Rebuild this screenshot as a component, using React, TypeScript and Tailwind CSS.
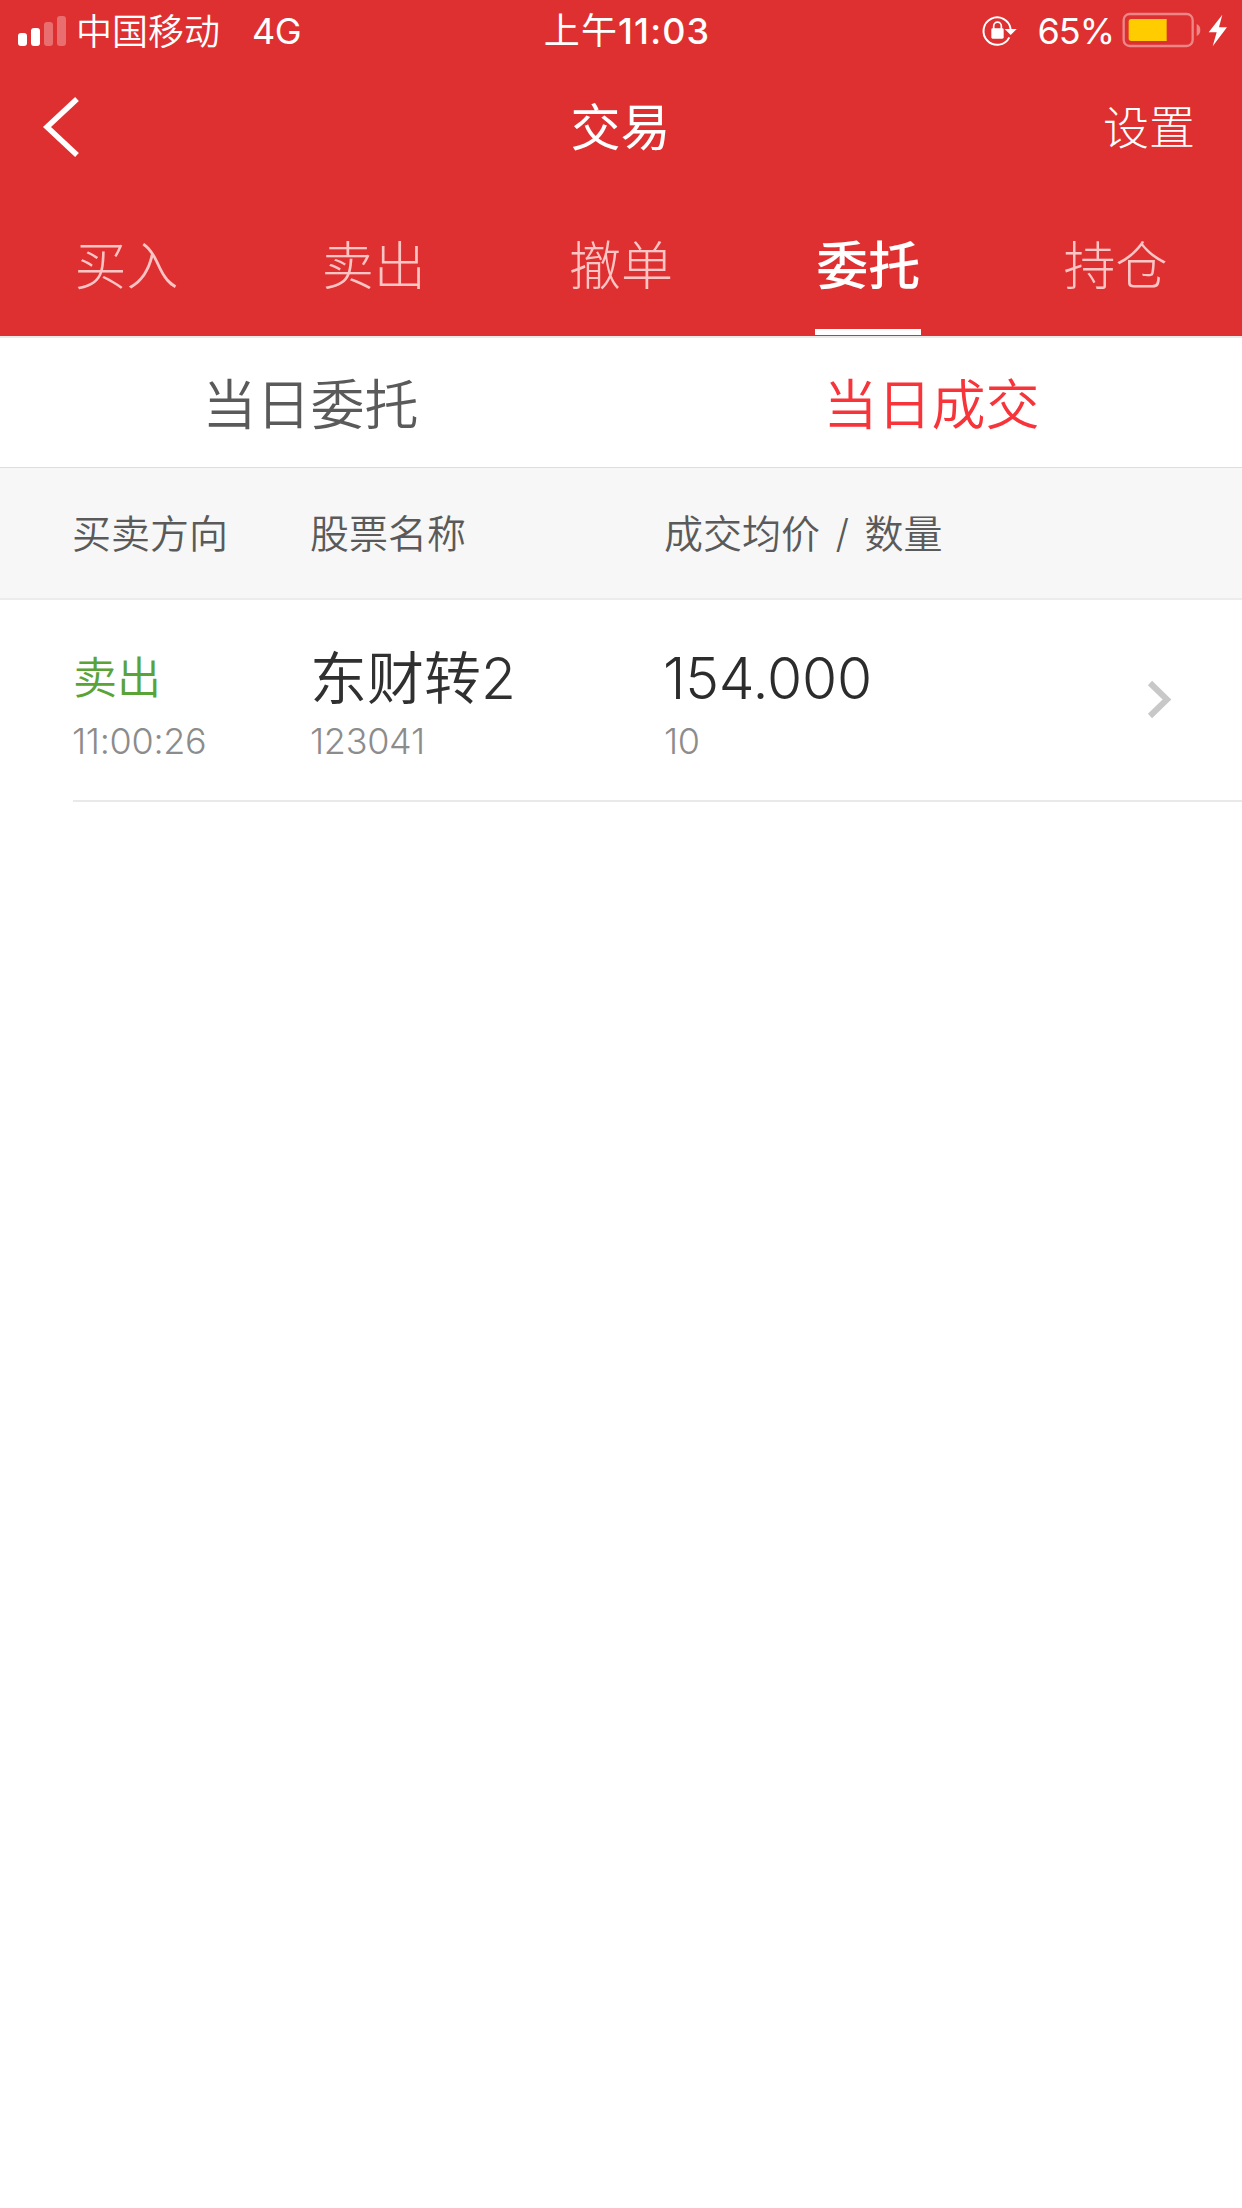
import clsx from "clsx";

const tabs = ["买入", "卖出", "撤单", "委托", "持仓"];
const activeTab = "委托";

const deals = [
  { side: "卖出", time: "11:00:26", name: "东财转2", code: "123041", price: "154.000", amount: "10" },
];

function SignalBars() {
  return (
    <div className="flex items-end gap-1">
      <span className="h-[13px] w-[9px] rounded-[3px] bg-white" />
      <span className="h-[18px] w-[9px] rounded-[3px] bg-white" />
      <span className="h-6 w-[9px] rounded-[3px] bg-white/30" />
      <span className="h-[30px] w-[9px] rounded-[3px] bg-white/30" />
    </div>
  );
}

function RotationLock() {
  return (
    <svg className="h-[34px] w-9" viewBox="64 38 108 102" fill="none">
      <path d="M149 111A41 41 0 1 1 153 86" stroke="#fff" strokeWidth="6" />
      <path d="M135 86H171L153 104Z" fill="#fff" />
      <rect x="95" y="84" width="37" height="31" rx="4" fill="#fff" />
      <path d="M102 86V77a11.5 11.5 0 0 1 23 0V86" stroke="#fff" strokeWidth="5" />
    </svg>
  );
}

function Battery() {
  return (
    <svg className="h-9 w-20" viewBox="484 36 240 108" fill="none">
      <rect x="489" y="42" width="207" height="96" rx="18" stroke="#fff" strokeOpacity=".42" strokeWidth="7" />
      <path d="M512 57H618V123H512Q504 123 504 115V65Q504 57 512 57Z" fill="#ffcc00" />
      <path d="M708 72Q719 77 719 90T708 108Z" fill="#fff" fillOpacity=".42" />
    </svg>
  );
}

function Bolt() {
  return (
    <svg className="h-9 w-5" viewBox="745 36 60 108">
      <path d="M788 44L747 97H771L759 139L802 82H778Z" fill="#fff" />
    </svg>
  );
}

function StatusBar() {
  return (
    <div className="grid h-[62px] grid-cols-3 items-center text-[36px] leading-none text-white">
      <div className="flex items-center pl-[18px]">
        <SignalBars />
        <span className="mt-[1px] ml-[10px] font-[350]">中国移动</span>
        <span className="ml-8 font-normal tracking-[-0.5px]">4G</span>
      </div>
      <div className="pl-[12px] text-center font-medium tracking-[1.1px]">
        <span className="font-normal">上午</span>11:03
      </div>
      <div className="flex items-center justify-end pr-[14px]">
        <span className="mr-[20px] -mt-[2px] flex">
          <RotationLock />
        </span>
        <span className="mr-[8px] font-normal tracking-[-1px]">65%</span>
        <span className="-mt-[2px] flex items-center gap-[6px]">
          <Battery />
          <Bolt />
        </span>
      </div>
    </div>
  );
}

function NavBar() {
  return (
    <div className="grid h-[130px] grid-cols-3 items-center leading-none text-white">
      <svg className="ml-[42px] h-[62px] w-10" viewBox="0 0 40 62" fill="none">
        <path d="M35 3L5 31L35 59" stroke="#fff" strokeWidth="5.5" />
      </svg>
      <div className="pt-[1px] pr-[1px] text-center text-[50px] font-normal">交易</div>
      <div className="pr-[47px] text-right text-[46px] font-light">设置</div>
    </div>
  );
}

function TabBar() {
  return (
    <div className="grid h-36 grid-cols-5 px-[3px] text-[52px] leading-none">
      {tabs.map((tab) => (
        <div key={tab} className="relative flex items-center justify-center pt-[5px]">
          <span className={tab === activeTab ? "font-medium text-white" : "font-light text-[#ffc4c4]"}>{tab}</span>
          {tab === activeTab && <span className="absolute bottom-[1px] h-[6px] w-[106px] bg-white" />}
        </div>
      ))}
    </div>
  );
}

function SubTabs() {
  return (
    <div className="grid h-[132px] grid-cols-2 border-t-2 border-b border-t-[#ece9e9] border-b-[#dedede] pt-[6px] text-[54px] leading-none font-[350]">
      <div className="flex items-center justify-center text-[#5a5a5a]">当日委托</div>
      <div className="flex items-center justify-center text-[#f7343a]">当日成交</div>
    </div>
  );
}

const columns = "grid grid-cols-[237px_354px_1fr_auto] pl-[73px]";

function DealRow({ deal }: { deal: (typeof deals)[number] }) {
  return (
    <div>
      <div className={clsx(columns, "h-[200px] pt-[50px] leading-none")}>
        <div>
          <div className="flex h-14 items-center text-[44px] font-[350] text-[#5aa337]">{deal.side}</div>
          <div className="-ml-[1px] mt-[17px] text-[36px] font-light tracking-[-0.3px] text-[#8c8c8c]">{deal.time}</div>
        </div>
        <div>
          <div className="flex h-14 items-center pt-[1px] text-[57px] font-[350] text-[#303030]">{deal.name}</div>
          <div className="mt-[17px] text-[36px] font-light tracking-[-0.3px] text-[#8c8c8c]">{deal.code}</div>
        </div>
        <div>
          <div className="-ml-[1px] flex h-14 items-center pt-[1px] text-[57px] font-light tracking-[-0.2px] text-[#2c2c2c]">{deal.price}</div>
          <div className="mt-[17px] text-[36px] font-light tracking-[-0.3px] text-[#8c8c8c]">{deal.amount}</div>
        </div>
        <svg className="mt-[28px] mr-[67px] h-11 w-[30px]" viewBox="0 0 30 44" fill="none">
          <path d="M5 5L22 21.5L5 38" stroke="#c8c8c8" strokeWidth="6" />
        </svg>
      </div>
      <div className="ml-[73px] h-[2px] bg-[#e9e9e9]" />
    </div>
  );
}

export default function App() {
  return (
    <div className="min-h-[2208px] w-[1242px] overflow-hidden bg-white font-['Inter','Noto_Sans_CJK_SC',sans-serif]">
      <header className="bg-[#de3031]">
        <StatusBar />
        <NavBar />
        <TabBar />
      </header>
      <SubTabs />
      <div className={clsx(columns, "h-[132px] items-center border-b-2 border-[#ececec] bg-[#f7f7f7] text-[39px] leading-none font-[350] text-[#5a5a5a]")}>
        <span className="-ml-[1px]">买卖方向</span>
        <span>股票名称</span>
        <span className="[word-spacing:4.5px]">成交均价 / 数量</span>
      </div>
      {deals.map((deal) => (
        <DealRow key={deal.code} deal={deal} />
      ))}
    </div>
  );
}
